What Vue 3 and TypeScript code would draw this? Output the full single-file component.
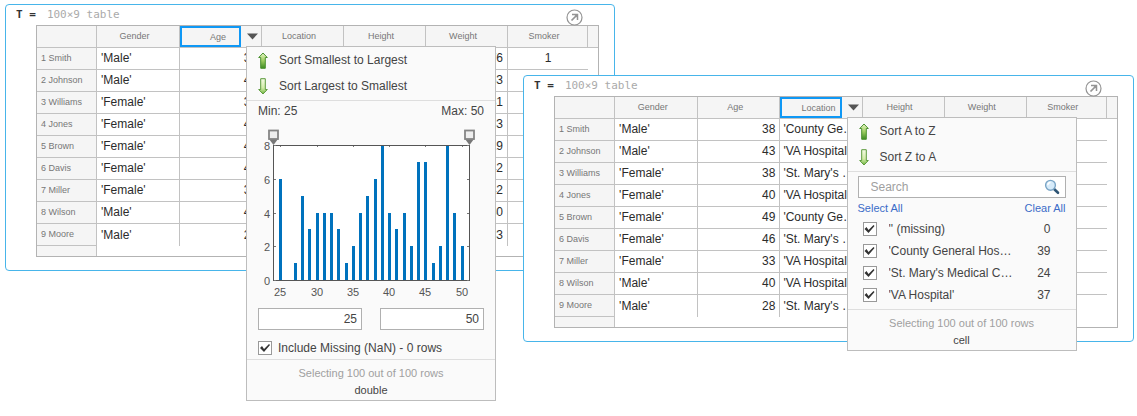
<script setup lang="ts">
import { ref } from 'vue'

type ColumnKey = 'gender' | 'age' | 'location' | 'height' | 'weight' | 'smoker'

interface Column {
  key: ColumnKey
  label: string
}

interface Patient {
  name: string
  gender: string
  age: number
  location: string
  height: number
  weight: number
  smoker: number
}

interface Panel {
  id: string
  active: ColumnKey
}

const panels: Panel[] = [
  { id: 'numeric', active: 'age' },
  { id: 'text', active: 'location' },
]

const columns: Column[] = [
  { key: 'gender', label: 'Gender' },
  { key: 'age', label: 'Age' },
  { key: 'location', label: 'Location' },
  { key: 'height', label: 'Height' },
  { key: 'weight', label: 'Weight' },
  { key: 'smoker', label: 'Smoker' },
]

const county = "'County General Hospital'"
const va = "'VA Hospital'"
const mary = "'St. Mary's Medical Center'"

const patients: Patient[] = [
  { name: 'Smith', gender: "'Male'", age: 38, location: county, height: 71, weight: 176, smoker: 1 },
  { name: 'Johnson', gender: "'Male'", age: 43, location: va, height: 69, weight: 163, smoker: 0 },
  { name: 'Williams', gender: "'Female'", age: 38, location: mary, height: 64, weight: 131, smoker: 0 },
  { name: 'Jones', gender: "'Female'", age: 40, location: va, height: 67, weight: 133, smoker: 0 },
  { name: 'Brown', gender: "'Female'", age: 49, location: county, height: 64, weight: 119, smoker: 0 },
  { name: 'Davis', gender: "'Female'", age: 46, location: mary, height: 68, weight: 142, smoker: 0 },
  { name: 'Miller', gender: "'Female'", age: 33, location: va, height: 64, weight: 142, smoker: 1 },
  { name: 'Wilson', gender: "'Male'", age: 40, location: va, height: 68, weight: 180, smoker: 0 },
  { name: 'Moore', gender: "'Male'", age: 28, location: mary, height: 68, weight: 183, smoker: 0 },
]

// Number of patients for each age, starting at 25
const counts = [6, 0, 1, 5, 3, 4, 4, 4, 3, 1, 2, 4, 5, 6, 8, 4, 3, 4, 2, 7, 7, 1, 2, 8, 4, 2]
const xTicks = [25, 30, 35, 40, 45, 50]
const yTicks = [0, 2, 4, 6, 8]

const plot = { left: 26, right: 222, top: 29, bottom: 164 }
const xAt = (age: number): number =>
  Math.round(plot.left + ((age - 24) / 27) * (plot.right - plot.left))
const yAt = (count: number): number =>
  Math.round(plot.bottom - (count / 8) * (plot.bottom - plot.top))

const minAge = ref('25')
const maxAge = ref('50')
const includeMissing = ref(true)
const query = ref('')

const categories = ref([
  { label: "'' (missing)", count: 0, checked: true },
  { label: county, count: 39, checked: true },
  { label: mary, count: 24, checked: true },
  { label: va, count: 37, checked: true },
])

function setAll(value: boolean): void {
  categories.value.forEach((c) => (c.checked = value))
}
</script>

<template>
  <main class="stage">
    <section v-for="panel in panels" :key="panel.id" class="panel" :class="panel.id">
      <header class="title">
        <span class="variable">T =</span>
        <span class="size">100×9 table</span>
      </header>
      <button type="button" class="open" aria-label="Open variable">
        <svg width="17" height="17" viewBox="0 0 17 17" fill="none" stroke="#949494">
          <circle cx="8.5" cy="8.5" r="7.5" fill="#fff" stroke-width="1.2" />
          <path d="M5.5 11.5 10.5 6.5" stroke-width="1.7" />
          <path d="M6 5.5h5.5V11" stroke-width="1.5" />
          <path d="M8 5.5h3.5V9z" fill="#949494" stroke="none" />
        </svg>
      </button>

      <table class="grid">
        <colgroup>
          <col class="c-name" />
          <col class="c-gender" />
          <col class="c-value" span="4" />
          <col class="c-smoker" />
          <col class="c-rest" />
        </colgroup>
        <thead>
          <tr>
            <th></th>
            <th v-for="col in columns" :key="col.key" scope="col" :class="{ active: col.key === panel.active }">
              <template v-if="col.key === panel.active">
                <div class="picked">
                  <button type="button" class="pick">{{ col.label }}</button>
                  <button type="button" class="arrow" :aria-label="col.label + ' menu'">
                    <svg width="11" height="7" viewBox="0 0 11 7"><path d="M0 0.5h11L5.5 6.5z" fill="#555" /></svg>
                  </button>
                </div>
                <div class="menu">
                  <div class="sorts">
                    <button type="button" class="sort">
                      <svg width="10" height="17" viewBox="0 0 10 17">
                        <defs>
                          <linearGradient :id="panel.id + '-up'" x1="0" y1="0" x2="0" y2="1">
                            <stop offset="0" stop-color="#e9f7c8" />
                            <stop offset="0.5" stop-color="#9fce62" />
                            <stop offset="1" stop-color="#3b8a22" />
                          </linearGradient>
                        </defs>
                        <path d="M5 1 9.3 5.5H7.3v10.8H2.7V5.5H.7z" :fill="`url(#${panel.id}-up)`" stroke="#4b9130" />
                      </svg>
                      {{ panel.id === 'numeric' ? 'Sort Smallest to Largest' : 'Sort A to Z' }}
                    </button>
                    <button type="button" class="sort">
                      <svg width="10" height="17" viewBox="0 0 10 17">
                        <defs>
                          <linearGradient :id="panel.id + '-down'" x1="0" y1="0" x2="0" y2="1">
                            <stop offset="0" stop-color="#f4fbe4" />
                            <stop offset="0.6" stop-color="#d3eca8" />
                            <stop offset="1" stop-color="#6fb540" />
                          </linearGradient>
                        </defs>
                        <path d="M5 16 .7 11.5h2V.7h4.6v10.8h2z" :fill="`url(#${panel.id}-down)`" stroke="#5c9a3c" />
                      </svg>
                      {{ panel.id === 'numeric' ? 'Sort Largest to Smallest' : 'Sort Z to A' }}
                    </button>
                  </div>

                  <div v-if="panel.id === 'numeric'" class="filter">
                    <div class="range">
                      <span>Min: 25</span>
                      <span>Max: 50</span>
                    </div>
                    <svg class="chart" viewBox="0 0 248 184" width="248" height="184" role="img" aria-label="Age histogram">
                      <rect x="26.5" y="29.5" width="196" height="135" fill="#fff" />
                      <rect
                        v-for="(n, i) in counts"
                        :key="i"
                        :x="xAt(25 + i) - 1"
                        :y="yAt(n)"
                        width="3"
                        :height="plot.bottom - yAt(n)"
                        fill="#0072bd"
                      />
                      <rect x="26.5" y="29.5" width="196" height="135" fill="none" stroke="#555" />
                      <path
                        v-for="t in xTicks"
                        :key="'xt' + t"
                        :d="`M${xAt(t) + 0.5} 30v1`"
                        stroke="#777"
                      />
                      <path
                        v-for="t in yTicks"
                        :key="'yt' + t"
                        :d="`M27 ${yAt(t) + 0.5}h2M220 ${yAt(t) + 0.5}h2`"
                        stroke="#777"
                      />
                      <text v-for="t in xTicks" :key="'x' + t" :x="xAt(t)" y="180" text-anchor="middle">{{ t }}</text>
                      <text v-for="t in yTicks" :key="'y' + t" x="23" :y="yAt(t) + 5" text-anchor="end">{{ t }}</text>
                      <g v-for="x in [26, 222]" :key="'s' + x" stroke="#858585">
                        <path :d="`M${x - 4} 23h9l-4.5 6z`" fill="#777" stroke="none" />
                        <rect :x="x - 4" y="14.5" width="9" height="8.5" fill="#eee" stroke-width="1.8" />
                      </g>
                    </svg>
                    <div class="bounds">
                      <input v-model="minAge" type="text" aria-label="Minimum" />
                      <input v-model="maxAge" type="text" aria-label="Maximum" />
                    </div>
                    <label class="missing">
                      <input v-model="includeMissing" type="checkbox" />
                      Include Missing (NaN) - 0 rows
                    </label>
                  </div>

                  <div v-else class="filter">
                    <div class="search">
                      <input v-model="query" type="text" placeholder="Search" aria-label="Search" />
                      <svg width="16" height="16" viewBox="0 0 16 16" fill="none">
                        <path d="M9.8 9.8 14 13.8" stroke="#2d5474" stroke-width="2.6" stroke-linecap="round" />
                        <circle cx="6.5" cy="6.3" r="4.9" fill="#d6ebfa" stroke="#7aa5c6" stroke-width="1.4" />
                        <path d="M3.8 6.2a2.8 2.8 0 0 1 2.7-2.7" stroke="#fff" stroke-width="1.4" />
                      </svg>
                    </div>
                    <div class="links">
                      <a href="#" @click.prevent="setAll(true)">Select All</a>
                      <a href="#" @click.prevent="setAll(false)">Clear All</a>
                    </div>
                    <ul class="options">
                      <li v-for="c in categories" :key="c.label">
                        <label>
                          <input v-model="c.checked" type="checkbox" />
                          <span class="option">{{ c.label }}</span>
                          <span class="count">{{ c.count }}</span>
                        </label>
                      </li>
                    </ul>
                  </div>

                  <footer class="status">
                    <div class="selecting">Selecting 100 out of 100 rows</div>
                    <div>{{ panel.id === 'numeric' ? 'double' : 'cell' }}</div>
                  </footer>
                </div>
              </template>
              <span v-else class="label">{{ col.label }}</span>
            </th>
            <th></th>
          </tr>
        </thead>
        <tbody>
          <tr v-for="(p, i) in patients" :key="p.name">
            <th scope="row">{{ i + 1 }} {{ p.name }}</th>
            <td v-for="col in columns" :key="col.key" :class="col.key">{{ p[col.key] }}</td>
            <td class="rest"></td>
          </tr>
        </tbody>
        <tfoot>
          <tr>
            <th></th>
            <td colspan="7"></td>
          </tr>
        </tfoot>
      </table>
    </section>
  </main>
</template>

<style>
body {
  margin: 0;
  background: #fff;
}
</style>

<style scoped>
.stage {
  display: grid;
  grid-template-columns: 518fr 92fr 519fr;
  align-items: start;
  padding: 4px 3px 60px 5px;
  font-family: 'Liberation Sans', Arial, sans-serif;
  font-size: 12px;
  color: #2b2b2b;
}

.stage *,
.stage *::after {
  box-sizing: border-box;
}

button,
input {
  margin: 0;
  font: inherit;
  color: inherit;
}

button {
  padding: 0;
  border: 0;
  background: none;
  cursor: pointer;
}

.panel {
  position: relative;
  grid-row: 1;
  padding: 0 15px 13px 30px;
  border: 1px solid #48b5ea;
  border-radius: 4px;
  background: #fff;
}

.panel.numeric {
  grid-column: 1 / 3;
}

.panel.text {
  grid-column: 2 / 4;
  margin-top: 71px;
}

.title {
  display: flex;
  gap: 11px;
  margin-left: -20px;
  font-family: 'DejaVu Sans Mono', monospace;
  font-size: 11px;
  line-height: 20px;
}

.variable {
  font-weight: bold;
  color: #333;
}

.size {
  color: #aaa;
}

.open {
  position: absolute;
  top: 4px;
  right: 31px;
}

.open svg,
.arrow svg,
.sort svg {
  display: block;
}

.grid {
  width: 100%;
  table-layout: fixed;
  border: 1px solid #b3b3b3;
  border-collapse: separate;
  border-spacing: 0;
}

.c-name {
  width: 60px;
}

.c-gender {
  width: 83px;
}

.c-value {
  width: 82px;
}

.c-smoker {
  width: 80px;
}

.c-rest {
  width: 10px;
}

th,
td {
  height: 22px;
  padding: 0 4px 1px;
  border: solid #c2c2c2;
  border-width: 0 1px 1px 0;
  line-height: 16px;
  white-space: nowrap;
}

th {
  background: #f5f5f5;
  color: #777;
  font-size: 9px;
  font-weight: normal;
}

thead th:last-child {
  border-right: 0;
}

thead .label {
  margin-right: 7px;
}

tbody th {
  text-align: left;
}

td {
  overflow: hidden;
  text-align: right;
  text-overflow: ellipsis;
}

td.gender,
td.location {
  text-align: left;
}

td.location {
  padding: 0 1px 1px 3px;
}

td.smoker {
  border-right: 0;
  text-align: center;
}

td.rest {
  border: 0;
}

tbody tr:last-child td {
  border-bottom: 0;
}

tfoot th,
tfoot td {
  height: 10px;
  border-bottom: 0;
}

tfoot td {
  border: 0;
}

th.active {
  position: relative;
  padding: 0;
}

.picked {
  display: flex;
  height: 21px;
}

.pick {
  flex: 1;
  padding: 1px 0 0 15px;
  border: 2px solid #0f98f5;
}

.arrow {
  flex: 0 0 20px;
  padding-left: 6px;
}

.menu {
  position: absolute;
  z-index: 2;
  top: calc(100% - 1px);
  left: calc(100% - 15px);
  width: 250px;
  border: 1px solid #bdbdbd;
  background: #fafafa;
  color: #444;
  font-size: 12px;
  text-align: left;
}

.text .menu {
  width: 230px;
}

.sorts {
  padding-bottom: 1px;
  border-bottom: 1px solid #dedede;
}

.sort {
  display: flex;
  align-items: center;
  gap: 11px;
  width: 100%;
  height: 26px;
  padding-left: 11px;
}

.range {
  display: flex;
  justify-content: space-between;
  padding: 2px 11px 0;
}

.chart {
  display: block;
  margin-top: -3px;
}

.chart text {
  fill: #555;
  font-size: 11px;
}

.bounds {
  display: flex;
  gap: 18px;
  padding: 8px 11px 0;
}

.bounds input,
.search input {
  flex: 1;
  min-width: 0;
  height: 22px;
  border: 1px solid #b0b0b0;
  background: #fff;
}

.bounds input {
  padding: 0 4px;
  text-align: right;
}

.missing {
  display: flex;
  align-items: center;
  gap: 6px;
  padding: 10px 11px 3px;
}

input[type='checkbox'] {
  appearance: none;
  flex: none;
  width: 14px;
  height: 14px;
  border: 1px solid #999;
  background: #fff;
}

input[type='checkbox']:checked::after {
  content: '';
  display: block;
  width: 12px;
  height: 12px;
  background: #333;
  clip-path: polygon(1px 6px, 3px 4px, 5px 7px, 10px 2px, 11px 3px, 5px 10px);
}

.search {
  position: relative;
  display: flex;
  margin: 4px 10px 0;
}

.search input {
  padding: 0 30px 0 12px;
}

.search input::placeholder {
  color: #a0a0a0;
  opacity: 1;
}

.search svg {
  position: absolute;
  top: 3px;
  right: 6px;
}

.links {
  display: flex;
  justify-content: space-between;
  padding: 3px 10px 0;
  font-size: 11px;
  line-height: 14px;
}

a {
  color: #3a6cc8;
  text-decoration: none;
}

.options {
  margin: 0;
  padding: 3px 25px 3px 15px;
  list-style: none;
}

.options label {
  display: flex;
  align-items: center;
  height: 22px;
}

.option {
  flex: 1;
  margin-left: 12px;
  overflow: hidden;
  text-overflow: ellipsis;
}

.count {
  flex: 0 0 36px;
  text-align: right;
}

.status {
  padding: 5px 0 1px;
  border-top: 1px solid #dedede;
  font-size: 11px;
  line-height: 17px;
  text-align: center;
}

.selecting {
  color: #a0a0a0;
}
</style>
